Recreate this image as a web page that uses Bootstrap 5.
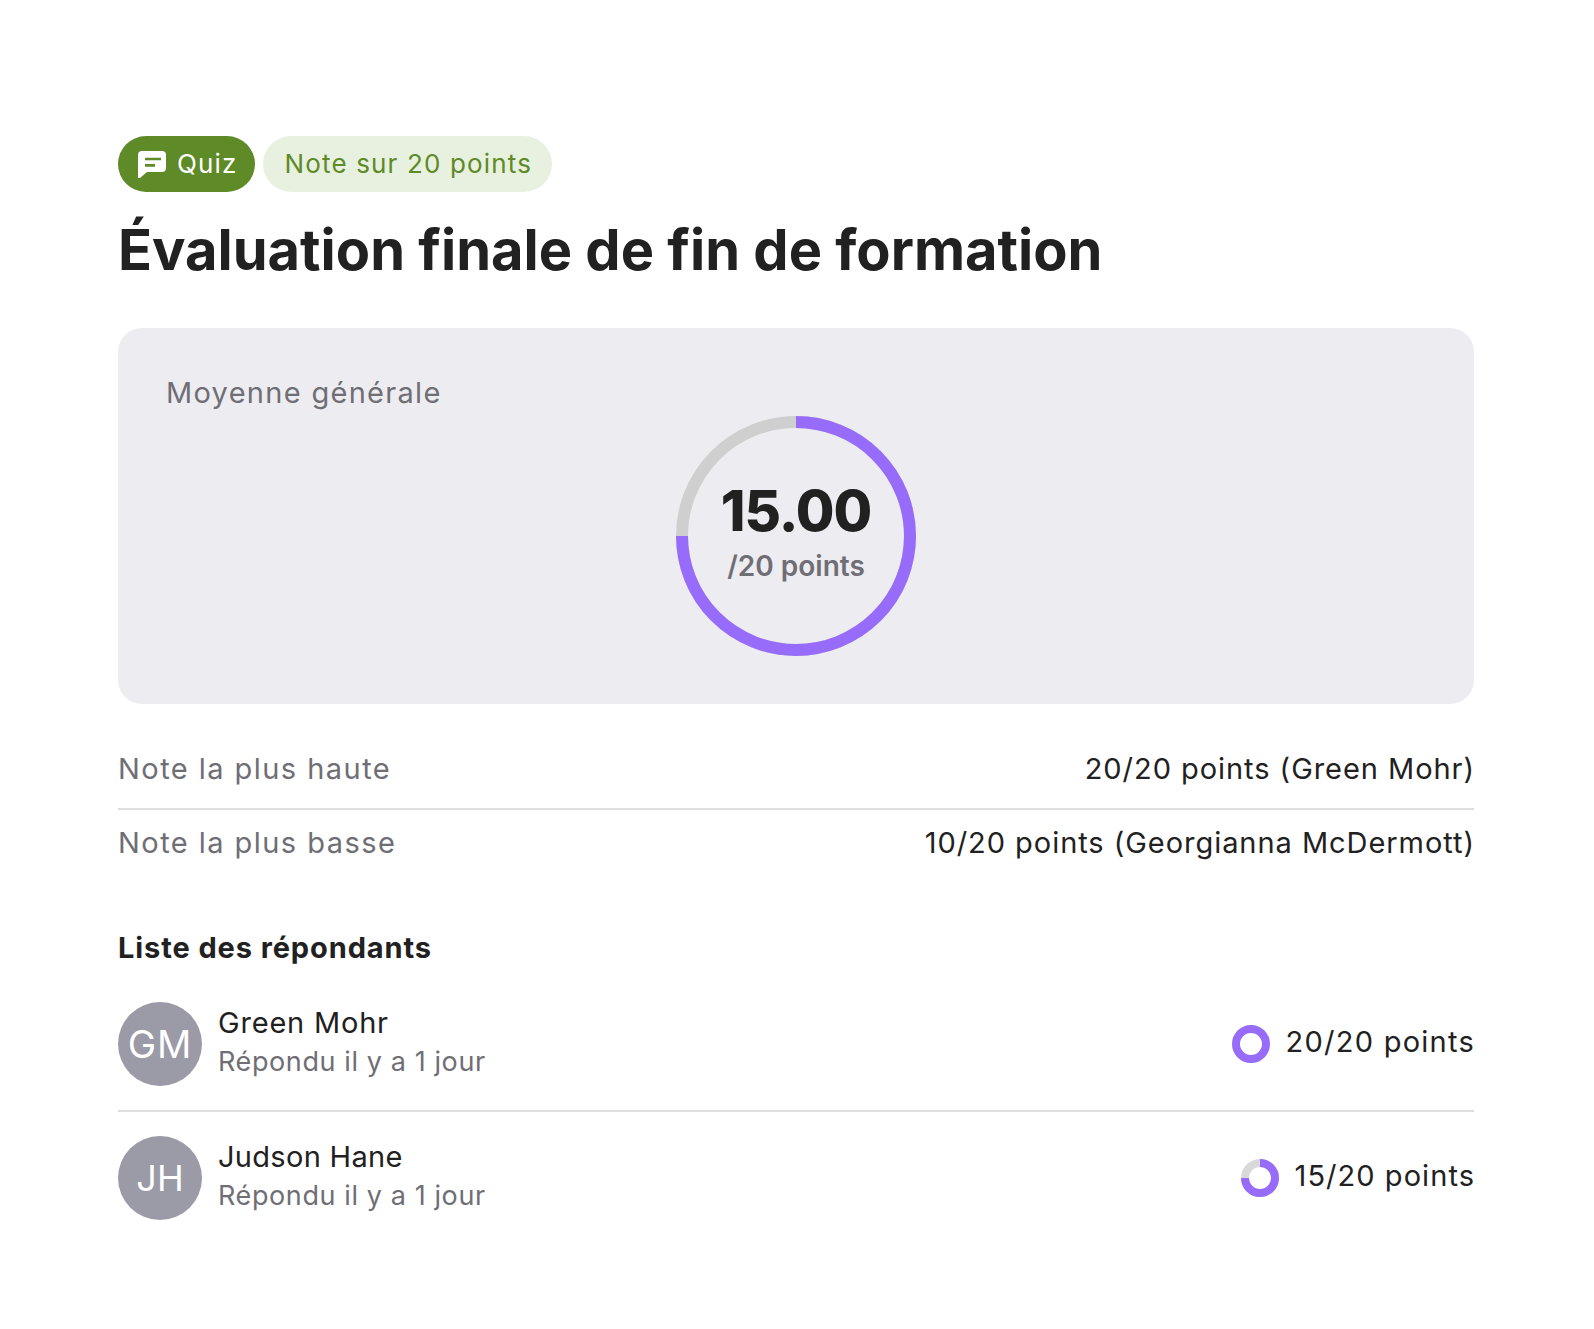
<!DOCTYPE html>
<html lang="fr">
<head>
    <meta charset="UTF-8">
    <meta name="viewport" content="width=device-width, initial-scale=1.0">
    <title>Évaluation finale de fin de formation</title>
    <link href="https://cdn.jsdelivr.net/npm/bootstrap@5.3.0/dist/css/bootstrap.min.css" rel="stylesheet">
    <style>
        body {
            font-family: "Inter", "Liberation Sans", sans-serif;
            color: #212121;
            background: #fff;
        }
        .quiz-page {
            padding: 136px 120px 100px 118px;
        }
        .pill-tag {
            height: 56px;
            border-radius: 28px;
            font-size: 26px;
            letter-spacing: 1.15px;
            padding-bottom: 2px;
        }
        .pill-quiz {
            background: #5e8a27;
            color: #fff;
            gap: 9px;
            padding: 0 17px 2px 20px;
        }
        .pill-note {
            background: #e8f1df;
            color: #5e8a27;
            padding: 0 20px 2px 22px;
        }
        .quiz-title {
            font-size: 56px;
            font-weight: 700;
            line-height: 64px;
            margin: 26px 0 46px;
        }
        .avg-box {
            background: #edecf1;
            border-radius: 24px;
            height: 376px;
            padding: 48px;
        }
        .avg-label {
            font-size: 29px;
            line-height: 34px;
            letter-spacing: 1.3px;
            color: #6f6e75;
            position: absolute;
            left: 48px;
            top: 48px;
        }
        .avg-ring {
            width: 240px;
            height: 240px;
            margin-top: 40px;
            padding-top: 65px;
            position: relative;
        }
        .avg-ring svg {
            position: absolute;
            inset: 0;
        }
        .avg-value {
            font-size: 56px;
            font-weight: 800;
            line-height: 60px;
            letter-spacing: -1px;
        }
        .avg-max {
            font-size: 28px;
            font-weight: 600;
            line-height: 32px;
            color: #6f6e75;
            margin-top: 9px;
        }
        .stat-list {
            margin-top: 30px;
        }
        .stat-row {
            font-size: 29px;
            line-height: 34px;
            letter-spacing: .95px;
            padding: 18px 0 22px;
        }
        .stat-row + .stat-row {
            border-top: 2px solid #dfdfdf;
            padding-top: 16px;
        }
        .muted-txt {
            color: #6f6e75;
            letter-spacing: 1.45px;
        }
        .list-title {
            font-size: 29px;
            font-weight: 700;
            line-height: 34px;
            letter-spacing: .9px;
            margin: 49px 0 37px;
        }
        .person-row {
            padding-bottom: 24px;
        }
        .person-row + .person-row {
            border-top: 2px solid #dfdfdf;
            padding-top: 24px;
        }
        .avatar-circle {
            width: 84px;
            height: 84px;
            background: #9b9aa7;
            color: #fff;
            font-size: 36px;
            flex: none;
        }
        .avatar-wide {
            font-size: 38px;
            letter-spacing: 1px;
        }
        .person-text {
            padding-bottom: 5px;
        }
        .person-name {
            font-size: 29px;
            line-height: 34px;
            letter-spacing: .8px;
        }
        .name-tight {
            letter-spacing: .3px;
        }
        .person-when {
            font-size: 27px;
            line-height: 32px;
            letter-spacing: .6px;
            color: #6f6e75;
            margin-top: 6px;
        }
        .person-score {
            font-size: 29px;
            letter-spacing: 1.05px;
            gap: 16px;
        }
        .score-txt {
            padding-bottom: 4px;
        }
        .score-wide {
            letter-spacing: 1.25px;
        }
        .end-txt {
            margin-right: -1px;
        }
    </style>
</head>
<body>
    <div class="quiz-page">
        <div class="d-flex gap-2">
            <span class="pill-tag pill-quiz d-inline-flex align-items-center">
                <svg width="30" height="30" viewBox="0 0 30 30"><path fill="#fff" fill-rule="evenodd" d="M4 3h20a4 4 0 0 1 4 4v13a4 4 0 0 1-4 4H9l-7 6a1 1 0 0 1-2-1V7a4 4 0 0 1 4-4ZM7 9.7v2.6h16V9.7Zm0 6.3v2.7h10V16Z"/></svg>
                Quiz
            </span>
            <span class="pill-tag pill-note d-inline-flex align-items-center">Note sur 20 points</span>
        </div>
        <h1 class="quiz-title">Évaluation finale de fin de formation</h1>

        <div class="avg-box position-relative d-flex justify-content-center">
            <div class="avg-label">Moyenne générale</div>
            <div class="avg-ring flex-shrink-0 d-flex flex-column align-items-center">
                <svg width="240" height="240" viewBox="0 0 240 240">
                    <circle cx="120" cy="120" r="114" fill="none" stroke="#cfcfcf" stroke-width="12"/>
                    <circle cx="120" cy="120" r="114" fill="none" stroke="#986cfb" stroke-width="12" pathLength="100" stroke-dasharray="75 25" transform="rotate(-90 120 120)"/>
                </svg>
                <div class="avg-value">15.00</div>
                <div class="avg-max">/20 points</div>
            </div>
        </div>

        <div class="stat-list">
            <div class="stat-row d-flex justify-content-between">
                <span class="muted-txt">Note la plus haute</span>
                <span class="end-txt">20/20 points (Green Mohr)</span>
            </div>
            <div class="stat-row d-flex justify-content-between">
                <span class="muted-txt">Note la plus basse</span>
                <span class="end-txt">10/20 points (Georgianna McDermott)</span>
            </div>
        </div>

        <div class="list-title">Liste des répondants</div>

        <div class="person-row d-flex align-items-center">
            <div class="avatar-circle avatar-wide rounded-circle d-flex align-items-center justify-content-center">GM</div>
            <div class="person-text ms-3 flex-grow-1">
                <div class="person-name">Green Mohr</div>
                <div class="person-when">Répondu il y a 1 jour</div>
            </div>
            <div class="person-score d-flex align-items-center">
                <svg width="38" height="38" viewBox="0 0 38 38"><circle cx="19" cy="19" r="15" fill="none" stroke="#986cfb" stroke-width="8"/></svg>
                <span class="score-txt score-wide end-txt">20/20 points</span>
            </div>
        </div>
        <div class="person-row d-flex align-items-center">
            <div class="avatar-circle rounded-circle d-flex align-items-center justify-content-center">JH</div>
            <div class="person-text ms-3 flex-grow-1">
                <div class="person-name name-tight">Judson Hane</div>
                <div class="person-when">Répondu il y a 1 jour</div>
            </div>
            <div class="person-score d-flex align-items-center">
                <svg width="38" height="38" viewBox="0 0 38 38">
                    <circle cx="19" cy="19" r="15" fill="none" stroke="#d9d9d9" stroke-width="8"/>
                    <circle cx="19" cy="19" r="15" fill="none" stroke="#986cfb" stroke-width="8" pathLength="100" stroke-dasharray="75 25" transform="rotate(-90 19 19)"/>
                </svg>
                <span class="score-txt end-txt">15/20 points</span>
            </div>
        </div>
    </div>
    <script src="https://cdn.jsdelivr.net/npm/bootstrap@5.3.0/dist/js/bootstrap.bundle.min.js"></script>
</body>
</html>
